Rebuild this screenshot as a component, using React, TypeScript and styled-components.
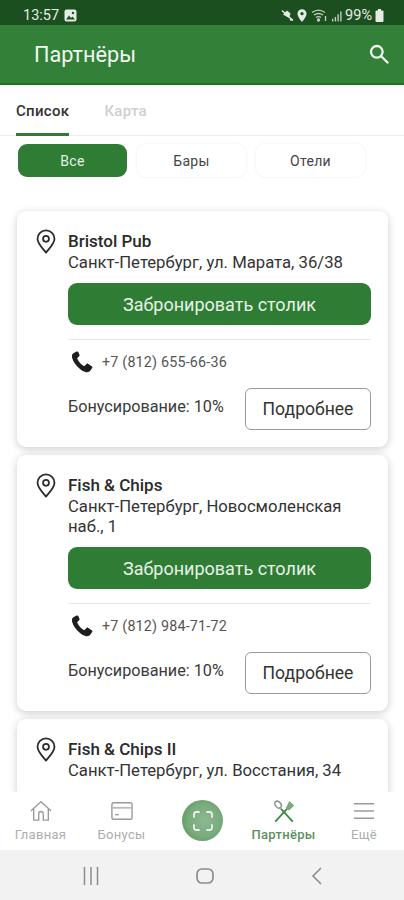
import React from 'react';
import styled, { createGlobalStyle } from 'styled-components';

const GlobalStyle = createGlobalStyle`
  html, body {
    margin: 0;
    padding: 0;
    background: #fff;
  }
  * {
    box-sizing: border-box;
  }
`;

const Screen = styled.div`
  width: 404px;
  height: 900px;
  display: flex;
  flex-direction: column;
  overflow: hidden;
  font-family: Roboto, "Noto Sans", sans-serif;
  color: #2b2b2b;
  background: #fff;
`;

const StatusBar = styled.div`
  height: 25px;
  flex: none;
  display: flex;
  align-items: center;
  justify-content: space-between;
  padding: 6px 20px 0 23px;
  background: #1c4f20;
  color: #e4ece4;
  font-size: 14.5px;
`;

const StatusGroup = styled.div<{ $gap: number }>`
  display: flex;
  align-items: center;
  gap: ${(p) => p.$gap}px;
`;

const AppBar = styled.header`
  height: 60px;
  flex: none;
  display: flex;
  align-items: center;
  justify-content: space-between;
  padding: 0 15px 0 34px;
  background: #338038;
  border-bottom: 2px solid #17761f;
  color: #f2f7f2;
  font-size: 21.7px;
`;

const Tabs = styled.nav`
  height: 51px;
  flex: none;
  display: flex;
  padding-left: 16px;
  gap: 35px;
  border-bottom: 1px solid #efefef;
`;

const Tab = styled.div<{ $active?: boolean }>`
  height: 51px;
  padding-top: 17px;
  font-size: 15px;
  font-weight: 500;
  letter-spacing: 0.3px;
  color: ${(p) => (p.$active ? '#333' : '#cfcfcf')};
  border-bottom: 3px solid ${(p) => (p.$active ? '#2f7d34' : 'transparent')};
`;

const Chips = styled.div`
  flex: none;
  display: flex;
  gap: 10px;
  padding: 8px 0 0 18px;
`;

const Chip = styled.div<{ $active?: boolean }>`
  width: 109px;
  height: 33px;
  display: flex;
  align-items: center;
  justify-content: center;
  border-radius: 9px;
  font-size: 14px;
  letter-spacing: 0.3px;
  background: ${(p) => (p.$active ? '#2f7d34' : '#fff')};
  color: ${(p) => (p.$active ? '#e6f0e6' : '#444')};
  box-shadow: ${(p) => (p.$active ? 'none' : '0 0 3px rgba(0, 0, 0, 0.08)')};
`;

const CardList = styled.main`
  flex: 1;
  min-height: 0;
  overflow: hidden;
  display: flex;
  flex-direction: column;
  gap: 8px;
  padding: 34px 16px 0 17px;
`;

const Card = styled.article`
  flex: none;
  display: grid;
  grid-template-columns: 51px 1fr;
  padding: 18px 17px 17px 0;
  border-radius: 9px;
  background: #fff;
  box-shadow: 0 2px 8px rgba(0, 0, 0, 0.2);
`;

const PinCell = styled.div`
  display: flex;
  justify-content: center;
  padding: 0 0 0 7px;
`;

const CardBody = styled.div`
  min-width: 0;
`;

const Name = styled.div`
  font-size: 17px;
  font-weight: 500;
  line-height: 24px;
  color: #2a2a2a;
`;

const Address = styled.div`
  font-size: 16.7px;
  line-height: 20px;
  color: #333;
`;

const BookButton = styled.button`
  display: block;
  width: 100%;
  height: 42px;
  margin-top: 10px;
  border: 0;
  border-radius: 9px;
  background: #2f7d34;
  color: #e8f2e8;
  font: 400 18px Roboto, sans-serif;
`;

const Divider = styled.hr`
  height: 1px;
  margin: 14px 0 0;
  border: 0;
  background: #e8e8e8;
`;

const PhoneRow = styled.div`
  display: flex;
  align-items: center;
  gap: 8px;
  height: 22px;
  margin: 11px 0 0 2px;
  font-size: 14.3px;
  letter-spacing: 0.2px;
  color: #555;
`;

const FooterRow = styled.div`
  display: flex;
  align-items: center;
  justify-content: space-between;
  margin-top: 15px;
`;

const Bonus = styled.div`
  font-size: 16.2px;
  color: #3a3a3a;
  margin-top: -6px;
`;

const MoreButton = styled.button`
  width: 126px;
  height: 42px;
  border: 1px solid #9a9a9a;
  border-radius: 6px;
  background: #fff;
  color: #333;
  font: 400 17.6px Roboto, sans-serif;
`;

const BottomNav = styled.nav`
  height: 58px;
  flex: none;
  display: grid;
  grid-template-columns: 81px 81px 81px 81px 80px;
  background: #fff;
`;

const NavItem = styled.div<{ $active?: boolean }>`
  display: flex;
  flex-direction: column;
  align-items: center;
  padding-top: 8px;
  gap: 5px;
  font-size: 13px;
  font-weight: ${(p) => (p.$active ? 500 : 400)};
  letter-spacing: 0.3px;
  color: ${(p) => (p.$active ? '#5c8f60' : '#adadad')};
`;

const ScanCell = styled.div`
  display: flex;
  align-items: flex-start;
  justify-content: center;
  padding-top: 8px;
`;

const ScanButton = styled.div`
  width: 41px;
  height: 41px;
  display: flex;
  align-items: center;
  justify-content: center;
  border-radius: 50%;
  background: radial-gradient(circle at 55% 50%, #8fb892 0%, #78aa7c 55%, #488f4e 100%);
`;

const SystemBar = styled.div`
  height: 50px;
  flex: none;
  display: flex;
  align-items: center;
  gap: 97px;
  padding: 2px 0 0 83px;
  background: #f2f2f2;
`;

const PinIcon = () => (
  <svg width="20" height="25" viewBox="0 0 22 28" fill="none" stroke="#2b2b2b" strokeWidth="2">
    <path d="M11 26.500C7 21.500 1.500 16.500 1.500 11a9.500 9.500 0 0 1 19 0c0 5.500-5.500 10.500-9.500 15.500z" strokeLinejoin="round" />
    <circle cx="11" cy="11" r="3.300" />
  </svg>
);

const PhoneIcon = () => (
  <svg width="24" height="24" viewBox="0 0 24 24" fill="#1d1d1d">
    <path d="M6.600 1.600 3.400 3.300C1.900 4.200 1.600 6 2.200 8c1.700 5.800 7.500 12.300 13.400 14 1.800.5 3.500.2 4.600-1.200l2-2.700c.4-.5.3-1.100-.2-1.500l-4-2.800c-.5-.4-1.100-.3-1.500.1l-1.600 1.800c-.3.3-.7.4-1.100.2-2.500-1.300-5.300-4.400-6.400-7-.2-.4-.1-.8.2-1.100l1.600-1.500c.4-.4.5-1 .3-1.500L8.300 2.100c-.3-.6-1.100-.8-1.700-.5z" />
  </svg>
);

const SearchIcon = () => (
  <svg width="20" height="20" viewBox="0 0 22 22" fill="none" stroke="#f4f8f4" strokeWidth="2.500">
    <circle cx="8.600" cy="8.600" r="6.400" />
    <path d="m13.400 13.400 7 7" strokeLinecap="round" />
  </svg>
);

const HomeIcon = () => (
  <svg width="22" height="22" viewBox="0 0 24 24" fill="none" stroke="#9a9a9a" strokeWidth="1.500" strokeLinejoin="round">
    <path d="M1.500 11.500 12 2l10.500 9.500" strokeLinecap="round" />
    <path d="M4 9.500V22h5.500v-7a2.500 2.500 0 0 1 5 0v7H20V9.500" />
  </svg>
);

const CardIcon = () => (
  <svg width="22" height="22" viewBox="0 0 24 24" fill="none" stroke="#9a9a9a" strokeWidth="1.500">
    <rect x="1" y="3" width="22" height="18" rx="2" />
    <path d="M1 8.500h22" strokeWidth="2" stroke="#bbb" />
    <path d="M4.500 16h4" />
  </svg>
);

const CutleryIcon = () => (
  <svg width="22" height="22" viewBox="0 0 24 24" fill="none" stroke="#3f8a45" strokeWidth="1.600" strokeLinecap="round">
    <path d="M9 10 21 23" strokeWidth="2" />
    <path d="M15.500 9.500 3 23" strokeWidth="2" />
    <ellipse cx="5.500" cy="5" rx="3" ry="4.200" transform="rotate(-40 5.500 5)" stroke="#8a8a8a" />
    <path d="M15 8.500 18 2.500l4 3.500-4.500 4.500z" fill="#7aa97e" stroke="#7aa97e" />
  </svg>
);

const MenuIcon = () => (
  <svg width="22" height="22" viewBox="0 0 24 24" fill="none" stroke="#9a9a9a" strokeWidth="1.600">
    <path d="M1 4h22M1 12h22M1 20h22" />
  </svg>
);

const ScanIcon = () => (
  <svg width="22" height="22" viewBox="0 0 22 22" fill="none" stroke="#e8f2e8" strokeWidth="1.800" strokeLinecap="round">
    <path d="M2 7V4.500A2.500 2.500 0 0 1 4.500 2H7M15 2h2.500A2.500 2.500 0 0 1 20 4.500V7M20 15v2.500a2.500 2.500 0 0 1-2.500 2.500H15M7 20H4.500A2.500 2.500 0 0 1 2 17.500V15" />
  </svg>
);

const GalleryIcon = () => (
  <svg width="13" height="13" viewBox="0 0 13 13">
    <rect x="0.500" y="0.500" width="12" height="12" rx="2" fill="#e4ece4" />
    <path d="M2 10.500 5 6.500l2 2.500 1.500-1.500 2.500 3z" fill="#1c4f20" />
    <circle cx="9" cy="4" r="1.200" fill="#1c4f20" />
  </svg>
);

const MuteIcon = () => (
  <svg width="13" height="13" viewBox="0 0 13 13" fill="#e4ece4">
    <path d="M6 1.500 9.500 4.500 8 9 2 5.500z" />
    <path d="M1 1.500 12 11.500" stroke="#e4ece4" strokeWidth="1.400" />
    <circle cx="10" cy="10.500" r="1.200" />
  </svg>
);

const LocationIcon = () => (
  <svg width="10" height="13" viewBox="0 0 11 14">
    <path fillRule="evenodd" fill="#e4ece4" d="M5.500 0a5 5 0 0 1 5 5c0 3.500-5 9-5 9s-5-5.500-5-9a5 5 0 0 1 5-5zm0 3.200a1.800 1.800 0 1 0 0 3.600 1.800 1.800 0 0 0 0-3.600z" />
  </svg>
);

const WifiIcon = () => (
  <svg width="19" height="13" viewBox="0 0 17 13" fill="none" stroke="#bfcfc0" strokeWidth="1.300">
    <path d="M1 3.500c4-3 9-3 13 0M3 6c3-2 6-2 9 0M5 8.500c1.500-1 3.500-1 5 0" />
    <circle cx="7.500" cy="11" r="1" fill="#bfcfc0" />
    <path d="M14.500 7v5" />
  </svg>
);

const SignalIcon = () => (
  <svg width="10" height="12" viewBox="0 0 11 12" fill="#bfcfc0">
    <rect x="0" y="9" width="1.500" height="3" />
    <rect x="3" y="7" width="1.500" height="5" />
    <rect x="6" y="4" width="1.500" height="8" />
    <rect x="9" y="1" width="1.500" height="11" />
  </svg>
);

const BatteryIcon = () => (
  <svg width="9" height="13" viewBox="0 0 9 13" fill="#e4ece4">
    <path d="M3 0h3v1.500h1.500a1 1 0 0 1 1 1V12a1 1 0 0 1-1 1h-6a1 1 0 0 1-1-1V2.500a1 1 0 0 1 1-1H3z" />
  </svg>
);

const RecentsIcon = () => (
  <svg width="16" height="18" viewBox="0 0 16 18" stroke="#8c8c8c" strokeWidth="1.500">
    <path d="M1.500 0v18M8 0v18M14.500 0v18" />
  </svg>
);

const HomeKeyIcon = () => (
  <svg width="18" height="16" viewBox="0 0 18 16" fill="none" stroke="#8c8c8c" strokeWidth="1.700">
    <rect x="1" y="1" width="16" height="14" rx="5" />
  </svg>
);

const BackIcon = () => (
  <svg width="11" height="18" viewBox="0 0 11 18" fill="none" stroke="#8c8c8c" strokeWidth="1.600">
    <path d="M10 1 2 9l8 8" />
  </svg>
);

const partners = [
  { name: 'Bristol Pub', address: 'Санкт-Петербург, ул. Марата, 36/38', phone: '+7 (812) 655-66-36' },
  { name: 'Fish & Chips', address: 'Санкт-Петербург, Новосмоленская наб., 1', phone: '+7 (812) 984-71-72' },
  { name: 'Fish & Chips II', address: 'Санкт-Петербург, ул. Восстания, 34' },
];

const App = () => {
  return (
    <Screen>
      <GlobalStyle />
      <StatusBar>
        <StatusGroup $gap={5}>
          <span>13:57</span>
          <GalleryIcon />
        </StatusGroup>
        <StatusGroup $gap={3}>
          <MuteIcon />
          <LocationIcon />
          <WifiIcon />
          <SignalIcon />
          <span>99%</span>
          <BatteryIcon />
        </StatusGroup>
      </StatusBar>
      <AppBar>
        <span>Партнёры</span>
        <SearchIcon />
      </AppBar>
      <Tabs>
        <Tab $active>Список</Tab>
        <Tab>Карта</Tab>
      </Tabs>
      <Chips>
        <Chip $active>Все</Chip>
        <Chip>Бары</Chip>
        <Chip>Отели</Chip>
      </Chips>
      <CardList>
        {partners.map((p) => (
          <Card key={p.name}>
            <PinCell>
              <PinIcon />
            </PinCell>
            <CardBody>
              <Name>{p.name}</Name>
              <Address>{p.address}</Address>
              {p.phone && (
                <>
                  <BookButton>Забронировать столик</BookButton>
                  <Divider />
                  <PhoneRow>
                    <PhoneIcon />
                    {p.phone}
                  </PhoneRow>
                  <FooterRow>
                    <Bonus>Бонусирование: 10%</Bonus>
                    <MoreButton>Подробнее</MoreButton>
                  </FooterRow>
                </>
              )}
            </CardBody>
          </Card>
        ))}
      </CardList>
      <BottomNav>
        <NavItem>
          <HomeIcon />
          Главная
        </NavItem>
        <NavItem>
          <CardIcon />
          Бонусы
        </NavItem>
        <ScanCell>
          <ScanButton>
            <ScanIcon />
          </ScanButton>
        </ScanCell>
        <NavItem $active>
          <CutleryIcon />
          Партнёры
        </NavItem>
        <NavItem>
          <MenuIcon />
          Ещё
        </NavItem>
      </BottomNav>
      <SystemBar>
        <RecentsIcon />
        <HomeKeyIcon />
        <BackIcon />
      </SystemBar>
    </Screen>
  );
};

export default App;
